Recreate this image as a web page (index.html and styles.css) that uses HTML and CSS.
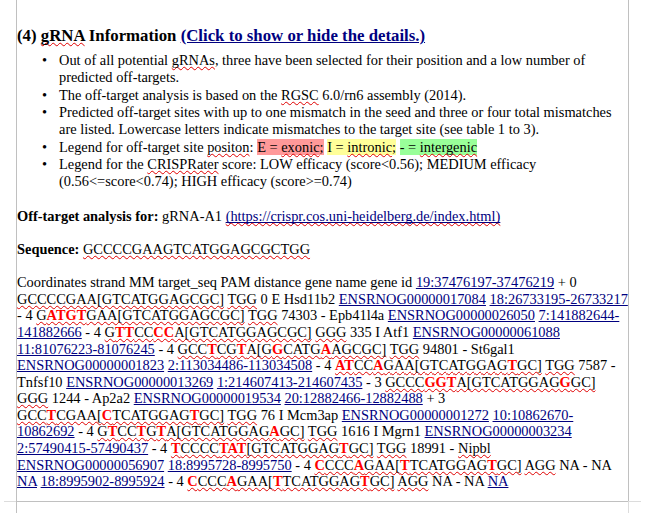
FILE: index.html
```html
<!DOCTYPE html>
<html lang="en">
<head>
<meta charset="utf-8">
<title>gRNA Information</title>
<link rel="stylesheet" href="styles.css">
</head>
<body>
<div class="page">
<h2 class="title">(4) <span class="sp">gRNA</span> Information <a href="#">(Click to show or hide the details.)</a></h2>
<ul class="notes">
<li><div>Out of all potential <span class="sp">gRNAs</span>, three have been selected for their position and a low number of<br>predicted off-targets.</div></li>
<li><div>The off-target analysis is based on the <span class="sp">RGSC</span> 6.0/rn6 assembly (2014).</div></li>
<li><div>Predicted off-target sites with up to one mismatch in the seed and three or four total mismatches<br>are listed. Lowercase letters indicate mismatches to the target site (see table 1 to 3).</div></li>
<li><div>Legend for off-target site <span class="sp">positon</span>: <span class="hl-e">E = <span class="sp">exonic</span>;</span> <span class="hl-i">I = <span class="sp">intronic</span>;</span> <span class="hl-g">- = <span class="sp">intergenic</span></span></div></li>
<li><div>Legend for the <span class="sp">CRISPRater</span> score: LOW efficacy (score&lt;0.56); MEDIUM efficacy<br>(0.56&lt;=score&lt;0.74); HIGH efficacy (score&gt;=0.74)</div></li>
</ul>
<div class="body">
<div class="line"><b>Off-target analysis for:</b> gRNA-A1 <a href="#"><span class="sp">(https://crispr.cos.uni-heidelberg.de/index.html)</span></a></div>
<div class="line">&nbsp;</div>
<div class="line"><b>Sequence:</b> <span class="sp">GCCCCGAAGTCATGGAGCGCTGG</span></div>
<div class="line">&nbsp;</div>
<div class="line">Coordinates strand MM target_seq PAM distance gene name gene id <a href="#">19:37476197-37476219</a> + 0</div>
<div class="line"><span class="sp">GCCCCGAA[GTCATGGAGCGC]</span> <span class="sp">TGG</span> 0 E Hsd11b2 <a href="#">ENSRNOG00000017084</a> <a href="#">18:26733195-26733217</a></div>
<div class="line">- 4 <span class="sp">G<b>ATGT</b>GAA[GTCATGGAGCGC]</span> <span class="sp">TGG</span> 74303 - Epb41l4a <a href="#">ENSRNOG00000026050</a> <a href="#">7:141882644-</a></div>
<div class="line"><a href="#">141882666</a> - 4 <span class="sp">G<b>TT</b>CC<b>CC</b>A[GTCATGGAGCGC]</span> <span class="sp">GGG</span> 335 I Atf1 <a href="#">ENSRNOG00000061088</a></div>
<div class="line"><a href="#">11:81076223-81076245</a> - 4 <span class="sp">GCC<b>T</b>CG<b>T</b>A[G<b>G</b>CATG<b>A</b>AGCGC]</span> <span class="sp">TGG</span> 94801 - St6gal1</div>
<div class="line"><a href="#">ENSRNOG00000001823</a> <a href="#">2:113034486-113034508</a> - 4 <span class="sp"><b>AT</b>CC<b>A</b>GAA[GTCATGGAG<b>T</b>GC]</span> <span class="sp">TGG</span> 7587 -</div>
<div class="line">Tnfsf10 <a href="#">ENSRNOG00000013269</a> <a href="#">1:214607413-214607435</a> - 3 <span class="sp">GCCC<b>GGT</b>A[GTCATGGAG<b>G</b>GC]</span></div>
<div class="line"><span class="sp">GGG</span> 1244 - Ap2a2 <a href="#">ENSRNOG00000019534</a> <a href="#">20:12882466-12882488</a> + 3</div>
<div class="line"><span class="sp">GCC<b>T</b>CGAA[<b>C</b>TCATGGAG<b>T</b>GC]</span> <span class="sp">TGG</span> 76 I Mcm3ap <a href="#">ENSRNOG00000001272</a> <a href="#">10:10862670-</a></div>
<div class="line"><a href="#">10862692</a> - 4 <span class="sp">G<b>T</b>CC<b>T</b>G<b>T</b>A[GTCATGGAG<b>A</b>GC]</span> <span class="sp">TGG</span> 1616 I Mgrn1 <a href="#">ENSRNOG00000003234</a></div>
<div class="line"><a href="#">2:57490415-57490437</a> - 4 <span class="sp"><b>T</b>CCCC<b>TAT</b>[GTCATGGAG<b>T</b>GC]</span> <span class="sp">TGG</span> 18991 - <span class="sp">Nipbl</span></div>
<div class="line"><a href="#">ENSRNOG00000056907</a> <a href="#">18:8995728-8995750</a> - 4 <span class="sp"><b>C</b>CCC<b>A</b>GAA[<b>T</b>TCATGGAG<b>T</b>GC]</span> <span class="sp">AGG</span> NA - NA</div>
<div class="line"><a href="#">NA</a> <a href="#">18:8995902-8995924</a> - 4 <span class="sp"><b>C</b>CCC<b>A</b>GAA[<b>T</b>TCATGGAG<b>T</b>GC]</span> <span class="sp">AGG</span> NA - NA <a href="#">NA</a></div>
</div>
<span class="mark mark-left"></span>
<span class="mark mark-right"></span>
<span class="tail tail-left"></span>
<span class="tail tail-right"></span>
</div>
</body>
</html>
```
FILE: styles.css
```css
html, body {
  margin: 0;
  padding: 0;
  background: #fff;
  overflow: hidden;
}
body {
  height: 515px;
  font-family: "Liberation Serif", serif;
  font-size: 14.4px;
  color: #000;
}
.page {
  position: relative;
  box-sizing: border-box;
  width: 613px;
  height: 502px;
  margin-left: 16px;
  padding: 26px 0 0 0;
  border-left: 1px solid #c0c0c0;
  border-right: 1px solid #c0c0c0;
  border-bottom: 1px solid #c0c0c0;
}
.title {
  margin: 0 0 6px;
  font-size: 16.8px;
  line-height: 20px;
  font-weight: bold;
  white-space: nowrap;
}
a {
  color: #000080;
  text-decoration: underline;
}
.notes {
  list-style: none;
  margin: 0 0 17px;
  padding: 0 0 0 25px;
  line-height: 17.35px;
  white-space: nowrap;
}
.notes li {
  display: flex;
}
.notes li::before {
  content: "•";
  flex: 0 0 17px;
}
.body {
  line-height: 16.6px;
}
.line {
  white-space: nowrap;
}
.sp {
  text-decoration: underline wavy #e00000 1px;
  text-decoration-skip-ink: none;
}
.sp b {
  color: #f00;
}
.hl-e { background: #ff9999; }
.hl-i { background: #ffff99; }
.hl-g { background: #99ff99; }
.mark {
  position: absolute;
  bottom: -1px;
  height: 1px;
  width: 12px;
  background: #dcdcdc;
}
.mark-left { left: -13px; }
.mark-right { right: -13px; }
.tail {
  position: absolute;
  top: 100%;
  width: 1px;
  height: 12px;
}
.tail-left { left: -1px; background: #c0c0c0; }
.tail-right { right: -1px; background: #dcdcdc; }
```
